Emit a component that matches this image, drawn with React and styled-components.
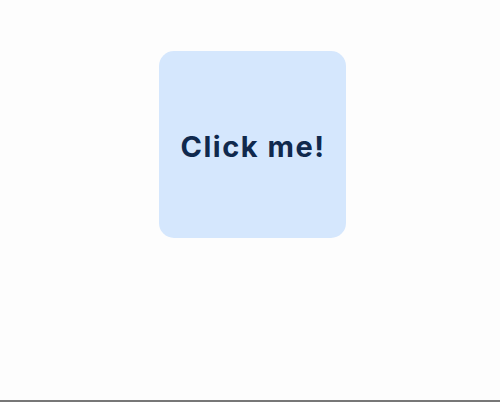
import React, { useState } from "react";
import styled, { createGlobalStyle } from "styled-components";

const GlobalStyle = createGlobalStyle`
  html, body {
    margin: 0;
    padding: 0;
    background: #fdfdfd;
  }
  * {
    box-sizing: border-box;
  }
`;

const Page = styled.div`
  display: flex;
  justify-content: center;
  align-items: flex-start;
  height: 402px;
  width: 500px;
  padding: 51px 0 0 5px;
  border-bottom: 2px solid #777777;
  background: #fdfdfd;
`;

const Card = styled.button`
  display: flex;
  justify-content: center;
  align-items: center;
  width: 187px;
  height: 187px;
  border: none;
  border-radius: 15px;
  background-color: ${(p) => (p.$active ? "#c4dcfb" : "#d5e7fd")};
  color: #10294d;
  font-family: Inter, "Liberation Sans", sans-serif;
  font-size: 29px;
  font-weight: 700;
  letter-spacing: 1.5px;
  cursor: pointer;
  padding: 3px 0 0 1px;
`;

const App = () => {
  let [clicked, setClicked] = useState(false);
  return (
    <>
      <GlobalStyle />
      <Page>
        <Card $active={clicked} onClick={() => setClicked(!clicked)}>
          Click me!
        </Card>
      </Page>
    </>
  );
};

export default App;
